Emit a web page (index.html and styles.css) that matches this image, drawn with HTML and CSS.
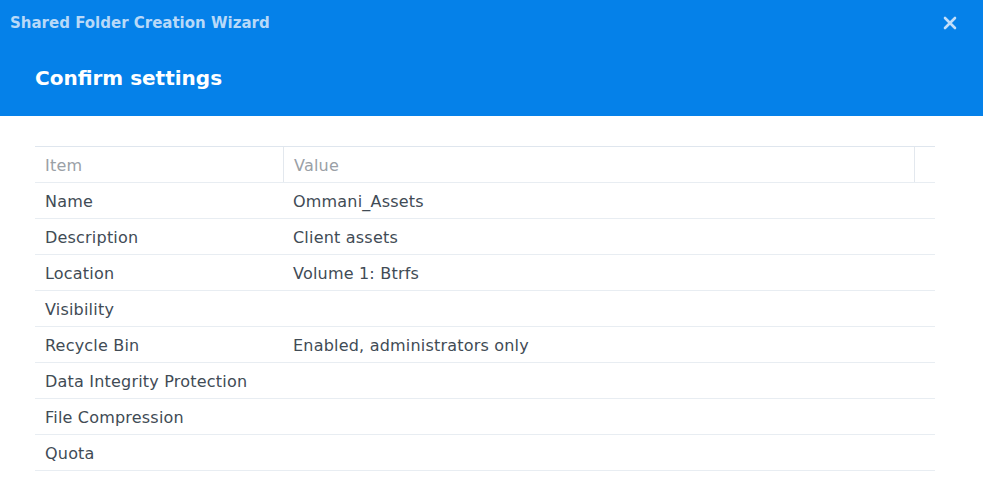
FILE: index.html
```html
<!DOCTYPE html>
<html>
<head>
<meta charset="utf-8">
<link rel="stylesheet" href="styles.css">
</head>
<body>
<div class="header">
  <div class="topbar">
    <div class="wizard-title">Shared Folder Creation Wizard</div>
    <div class="close">
      <svg width="14" height="14" viewBox="0 0 14 14"><path d="M2 2 L12 12 M12 2 L2 12" stroke="#c2defa" stroke-width="2.6" stroke-linecap="round"/></svg>
    </div>
  </div>
  <div class="step-title">Confirm settings</div>
</div>
<div class="content">
  <div class="grid">
    <div class="row head">
      <div class="c1">Item</div>
      <div class="c2">Value</div>
      <div class="c3"></div>
    </div>
    <div class="row"><div class="c1">Name</div><div class="c2">Ommani_Assets</div></div>
    <div class="row"><div class="c1">Description</div><div class="c2">Client assets</div></div>
    <div class="row"><div class="c1">Location</div><div class="c2">Volume 1: Btrfs</div></div>
    <div class="row"><div class="c1">Visibility</div><div class="c2"></div></div>
    <div class="row"><div class="c1">Recycle Bin</div><div class="c2">Enabled, administrators only</div></div>
    <div class="row"><div class="c1">Data Integrity Protection</div><div class="c2"></div></div>
    <div class="row"><div class="c1">File Compression</div><div class="c2"></div></div>
    <div class="row"><div class="c1">Quota</div><div class="c2"></div></div>
  </div>
</div>
</body>
</html>
```
FILE: styles.css
```css
html, body {
  margin: 0;
  padding: 0;
  background: #fff;
  font-family: "DejaVu Sans", Verdana, sans-serif;
}
.header {
  background: #0581e9;
  height: 116px;
  box-sizing: border-box;
}
.topbar {
  height: 45px;
  display: flex;
  align-items: center;
  justify-content: space-between;
  padding: 1px 26px 0 10px;
  box-sizing: border-box;
}
.wizard-title {
  color: #b8d9f8;
  font-weight: bold;
  font-size: 15px;
}
.close {
  display: flex;
  width: 14px;
  height: 14px;
}
.step-title {
  color: #fff;
  font-weight: bold;
  font-size: 20px;
  padding: 21px 0 0 35px;
}
.content {
  padding: 30px 48px 0 35px;
}
.grid {
  border-top: 1px solid #dfe6ee;
}
.row {
  display: flex;
  height: 36px;
  border-bottom: 1px solid #e8edf2;
  box-sizing: border-box;
  font-size: 16px;
  letter-spacing: 0.2px;
  color: #414b55;
}
.row.head {
  color: #9aa0a6;
}
.c1 {
  box-sizing: border-box;
  width: 248px;
  padding: 2px 0 0 10px;
  display: flex;
  align-items: center;
}
.c2 {
  flex: 1;
  padding: 2px 0 0 10px;
  display: flex;
  align-items: center;
}
.head .c2 {
  border-left: 1px solid #e3e8ee;
  border-right: 1px solid #e3e8ee;
}
.c3 {
  width: 20px;
}
```
